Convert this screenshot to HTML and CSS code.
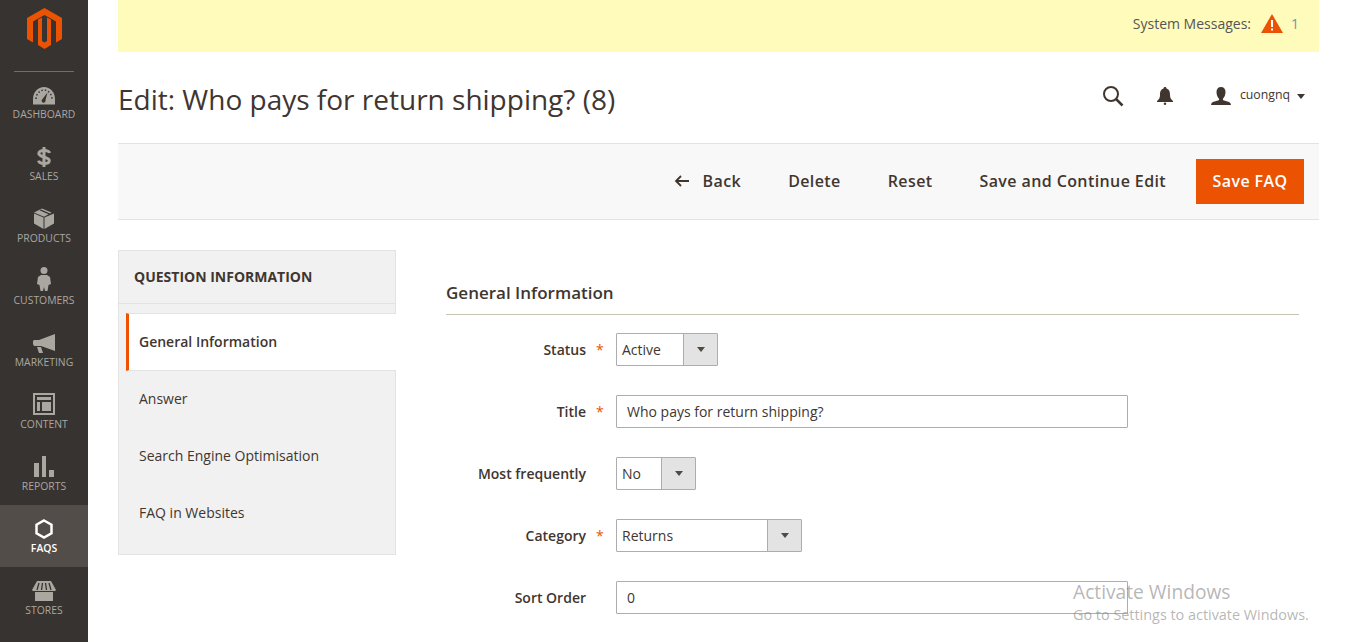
FILE: index.html
```html
<!DOCTYPE html>
<html lang="en">
<head>
<meta charset="UTF-8" />
<title>Edit FAQ</title>
<link rel="stylesheet" href="styles.css">
</head>
<body>

<nav class="sidebar">
  <div class="logo">
    <svg width="35" height="41" viewBox="0 0 35 41"><path fill="#eb5202" d="M17.500 0 35 10v21l-6 3.500v-21L17.500 7 6 13.500v21L0 31V10z"/><path fill="#eb5202" d="M11 11.500l4-2V33l2.500 1.500L20 33V9.500l4 2V37l-6.500 4L11 37z"/></svg>
  </div>
  <a class="nav-item first">
    <svg width="22" height="18" viewBox="0 0 22 18"><path fill="#aaa6a0" d="M11 0C5 0 0 5 0 12v5.500h22V12C22 5 17 0 11 0z"/><path stroke="#373330" stroke-width="1.500" stroke-dasharray="1.500 2" fill="none" d="M3 12C3 7 7 3 11 3s8 4 8 9"/><path fill="#373330" d="M14.500 5.500 12.500 13a2 2 0 1 1-3-1z"/></svg>
    <span>DASHBOARD</span>
  </a>
  <a class="nav-item">
    <svg width="14" height="20" viewBox="0 0 14 20"><path fill="none" stroke="#aaa6a0" stroke-width="3" d="M12.500 6C12 4 10 3.500 7 3.500S1.800 4.500 1.800 6.500 4 9 7 10s5.300 1.500 5.300 3.500-2.300 3-5.300 3-5-1-5.500-2.800"/><rect x="5.500" y="0" width="3" height="20" fill="#aaa6a0"/></svg>
    <span>SALES</span>
  </a>
  <a class="nav-item">
    <svg width="20" height="21" viewBox="0 0 20 21"><path fill="#aaa6a0" d="M9.500 9.500 0 5.500v10l9.500 5.500zM10.500 9.500V21l9.500-5.500v-10zM0 4.500 8 .5l9.500 4-1.500 1-9-4-1.500.8 9 4-4.500 2.500z"/></svg>
    <span>PRODUCTS</span>
  </a>
  <a class="nav-item">
    <svg width="14" height="24" viewBox="0 0 14 24"><circle cx="7" cy="3.500" r="3.500" fill="#aaa6a0"/><path fill="#aaa6a0" d="M4 8h6l3 2 1 7-2.500 1-1 6H8l-1-4-1 4H3.500l-1-6L0 17l1-7z"/></svg>
    <span>CUSTOMERS</span>
  </a>
  <a class="nav-item">
    <svg width="22" height="19" viewBox="0 0 22 19"><path fill="#aaa6a0" d="M22 0v17L8 12H1L0 10V7l1-1h5zM4 13h4l2 6H6z"/></svg>
    <span>MARKETING</span>
  </a>
  <a class="nav-item">
    <svg width="22" height="22" viewBox="0 0 22 22"><path fill="#aaa6a0" fill-rule="evenodd" d="M0 0h22v22H0zM2 2v18h18V2zM4 4h14v3H4zM4 9h3v9H4zM9 9h9v9H9z"/></svg>
    <span>CONTENT</span>
  </a>
  <a class="nav-item">
    <svg width="20" height="21" viewBox="0 0 20 21"><path fill="#aaa6a0" d="M0 7h5v14H0zM8 0h4v21H8zM15 14h5v7h-5z"/></svg>
    <span>REPORTS</span>
  </a>
  <a class="nav-item active">
    <svg width="18" height="20" viewBox="0 0 18 20"><path fill="none" stroke="#fff" stroke-width="2.500" d="M9 1.500 16.500 5.700v8.600L9 18.500 1.500 14.300V5.700z"/></svg>
    <span>FAQS</span>
  </a>
  <a class="nav-item">
    <svg width="24" height="20" viewBox="0 0 24 20"><path fill="#aaa6a0" d="M3 11h18v9H3zM5 0h14l5 9-1 1H1L0 9z"/><path stroke="#373330" stroke-width="1.300" d="M7 2 5 9M10.500 2 9.500 9M13.500 2l1 7M17 2l2 7"/></svg>
    <span>STORES</span>
  </a>
</nav>

<main class="main">
  <div class="system-bar">
    <span class="system-label">System Messages:</span>
    <svg class="warn" width="22" height="19" viewBox="0 0 22 19"><path fill="#eb5202" d="M11 0 22 19H0z"/><path fill="#fff" d="M10 6h2v7h-2zM10 14.500h2v2h-2z"/></svg>
    <span class="system-count">1</span>
  </div>

  <header class="page-head">
    <h1>Edit: Who pays for return shipping? (8)</h1>
    <div class="head-tools">
      <svg class="tool-search" width="22" height="22" viewBox="0 0 22 22"><circle cx="9" cy="9" r="7" fill="none" stroke="#41362f" stroke-width="2"/><path stroke="#41362f" stroke-width="2.500" d="m14 14 6.500 6.500"/></svg>
      <svg class="tool-bell" width="16" height="18" viewBox="0 0 16 18"><path fill="#41362f" d="M8 0c1 0 1.500.7 1.500 1.500C12.500 2.500 13 5 13 8s1 4 3 6v1H0v-1c2-2 3-3 3-6s.5-5.500 3.500-6.500C6.500.7 7 0 8 0z"/><circle cx="8" cy="16.800" r="1.200" fill="#41362f"/></svg>
      <div class="user">
        <svg width="20" height="18" viewBox="0 0 20 18"><path fill="#41362f" d="M10 0c3 0 4.500 2 4.500 5s-1.500 6-2.500 6.500v1.500c2 1.500 8 1 8 5H0c0-4 6-3.500 8-5v-1.500C7 11 5.500 8 5.500 5S7 0 10 0z"/></svg>
        <span class="user-name">cuongnq</span>
        <i class="caret-small"></i>
      </div>
    </div>
  </header>

  <div class="action-bar">
    <a class="action back">
      <svg width="15" height="12" viewBox="0 0 15 12"><path fill="none" stroke="#41362f" stroke-width="1.800" d="M15 6H2M7 1 2 6l5 5"/></svg>
      Back
    </a>
    <a class="action">Delete</a>
    <a class="action">Reset</a>
    <a class="action">Save and Continue Edit</a>
    <a class="primary">Save FAQ</a>
  </div>

  <div class="columns">
    <aside class="tabs">
      <div class="tabs-title">QUESTION INFORMATION</div>
      <div class="tab-list">
        <a class="tab current">General Information</a>
        <a class="tab">Answer</a>
        <a class="tab">Search Engine Optimisation</a>
        <a class="tab">FAQ in Websites</a>
      </div>
    </aside>

    <section class="form">
      <h2>General Information</h2>
      <div class="field">
        <label>Status</label><b class="star">*</b>
        <div class="select w-status"><span>Active</span><i></i></div>
      </div>
      <div class="field">
        <label>Title</label><b class="star">*</b>
        <div class="input">Who pays for return shipping?</div>
      </div>
      <div class="field">
        <label>Most frequently</label><b class="star"></b>
        <div class="select w-no"><span>No</span><i></i></div>
      </div>
      <div class="field">
        <label>Category</label><b class="star">*</b>
        <div class="select w-cat"><span>Returns</span><i></i></div>
      </div>
      <div class="field">
        <label>Sort Order</label><b class="star"></b>
        <div class="input">0</div>
      </div>
    </section>
  </div>
</main>

<div class="activate">
  <div class="activate-big">Activate Windows</div>
  <div class="activate-small">Go to Settings to activate Windows.</div>
</div>

</body>
</html>
```

FILE: styles.css
```css
html, body {
  margin: 0;
  padding: 0;
  height: 642px;
  overflow: hidden;
}
body {
  display: flex;
  background: #fff;
  color: #41362f;
  font-family: "Open Sans", sans-serif;
  font-size: 14px;
}
.sidebar {
  width: 88px;
  height: 642px;
  flex: none;
  background: #373330;
  overflow: hidden;
}
.logo {
  height: 72px;
  margin: 0 14px;
  padding-top: 8px;
  box-sizing: border-box;
  display: flex;
  justify-content: center;
  border-bottom: 1px solid #736d67;
}
.nav-item {
  height: 62px;
  display: flex;
  flex-direction: column;
  align-items: center;
  justify-content: flex-end;
  padding-bottom: 12px;
  box-sizing: border-box;
  color: #aaa6a0;
  font-size: 10.4px;
  line-height: 14px;
  gap: 2px;
}
.nav-item.first {
  height: 61px;
}
.nav-item.active {
  background: #524d49;
  color: #fff;
  font-weight: 600;
}
.main {
  width: 1201px;
  margin-left: 30px;
  flex: none;
}
.system-bar {
  height: 52px;
  background: #fffbbb;
  display: flex;
  align-items: center;
  justify-content: flex-end;
  padding: 0 20px 6px 0;
  box-sizing: border-box;
}
.system-label {
  color: #555;
  margin-right: 10px;
}
.warn {
  margin-right: 8px;
}
.system-count {
  color: #7a8fa8;
}
.page-head {
  height: 91px;
  display: flex;
  align-items: center;
  justify-content: space-between;
  padding-top: 3px;
  box-sizing: border-box;
}
h1 {
  margin: 0;
  font-size: 28px;
  font-weight: 400;
  color: #41362f;
}
.head-tools {
  display: flex;
  align-items: center;
  padding-right: 12px;
  margin-bottom: 6px;
}
.tool-search {
  margin-right: 33px;
}
.tool-bell {
  margin-right: 38px;
}
.user {
  display: flex;
  align-items: center;
  font-size: 12.3px;
  gap: 9px;
}
.user-name {
  padding-bottom: 3px;
}
.caret-small {
  border: 4.5px solid transparent;
  border-top: 5px solid #41362f;
  border-bottom: 0;
  margin-left: -2px;
  margin-right: 2px;
}
.action-bar {
  height: 77px;
  background: #f8f8f8;
  border-top: 1px solid #e3e3e3;
  border-bottom: 1px solid #e3e3e3;
  box-sizing: border-box;
  display: flex;
  align-items: center;
  justify-content: flex-end;
  padding-right: 15px;
  font-size: 16px;
  font-weight: 600;
  letter-spacing: .4px;
}
.action {
  margin-right: 30px;
  margin-left: 17px;
  padding-bottom: 2px;
  display: flex;
  align-items: center;
  gap: 13px;
}
.back {
  gap: 14px;
}
.primary {
  background: #eb5202;
  color: #fff;
  height: 45px;
  line-height: 45px;
  padding: 0 16.500px;
  font-weight: 600;
}
.columns {
  display: flex;
  margin-top: 30px;
}
.tabs {
  width: 278px;
  height: 305px;
  box-sizing: border-box;
  flex: none;
  background: #f1f1f1;
  border: 1px solid #e3e3e3;
}
.tabs-title {
  height: 53px;
  line-height: 52px;
  padding-left: 15px;
  font-weight: 700;
  color: #41362f;
  border-bottom: 1px solid #e3e3e3;
  box-sizing: border-box;
}
.tab-list {
  padding-top: 9px;
}
.tab {
  display: block;
  height: 57px;
  line-height: 57px;
  padding-left: 20px;
  box-sizing: border-box;
  color: #41362f;
}
.tab.current {
  background: #fff;
  height: 58px;
  margin: 0 -1px -1px 7px;
  padding-left: 10px;
  border-left: 3px solid #eb5202;
  border-top: 1px solid #e3e3e3;
  border-bottom: 1px solid #e3e3e3;
  font-weight: 600;
  line-height: 55px;
}
.form {
  width: 853px;
  margin-left: 50px;
  padding-top: 32px;
}
h2 {
  margin: 0 0 18px;
  height: 33px;
  font-size: 17px;
  font-weight: 600;
  line-height: 22px;
  border-bottom: 1px solid #cac3b4;
  box-sizing: border-box;
}
.field {
  display: flex;
  align-items: center;
  height: 33px;
  margin-bottom: 29px;
}
.field label {
  width: 140px;
  text-align: right;
  font-weight: 600;
}
.star {
  width: 30px;
  padding-left: 10px;
  box-sizing: border-box;
  color: #eb5202;
  font-weight: 400;
}
.select {
  height: 33px;
  box-sizing: border-box;
  border: 1px solid #adadad;
  border-radius: 1px;
  display: flex;
  justify-content: space-between;
}
.select span {
  padding-left: 5px;
  line-height: 31px;
}
.select i {
  width: 34px;
  background: #e3e3e3;
  border-left: 1px solid #adadad;
  box-sizing: border-box;
  display: flex;
  align-items: center;
  justify-content: center;
}
.select i::after {
  content: "";
  border: 4.5px solid transparent;
  border-top: 5px solid #514943;
  border-bottom: 0;
}
.w-status { width: 102px; }
.w-no { width: 80px; }
.w-cat { width: 186px; }
.input {
  width: 512px;
  height: 33px;
  box-sizing: border-box;
  border: 1px solid #adadad;
  border-radius: 1px;
  padding-left: 10px;
  line-height: 31px;
}
.activate {
  position: absolute;
  left: 1073px;
  top: 580px;
  color: rgba(120, 120, 120, .55);
}
.activate-big {
  font-size: 19.200px;
  line-height: 24px;
}
.activate-small {
  font-size: 14.400px;
  line-height: 22px;
}
```
